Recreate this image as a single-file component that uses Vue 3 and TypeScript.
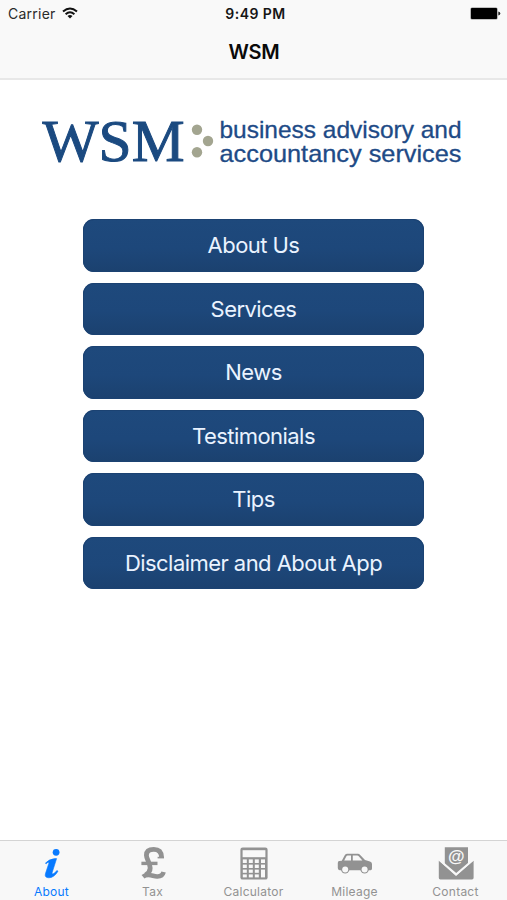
<script setup lang="ts">
import { ref } from 'vue'

type TabId = 'about' | 'tax' | 'calculator' | 'mileage' | 'contact'

interface Tab {
  id: TabId
  label: string
}

const menu: string[] = [
  'About Us',
  'Services',
  'News',
  'Testimonials',
  'Tips',
  'Disclaimer and About App',
]

const tabs: Tab[] = [
  { id: 'about', label: 'About' },
  { id: 'tax', label: 'Tax' },
  { id: 'calculator', label: 'Calculator' },
  { id: 'mileage', label: 'Mileage' },
  { id: 'contact', label: 'Contact' },
]

const active = ref<TabId>('about')
</script>

<template>
  <div class="screen">
    <header class="top">
      <div class="status">
        <div class="carrier">
          <span>Carrier</span>
          <svg class="wifi" width="16" height="12" viewBox="0 0 16 12">
            <g fill="none" stroke="#111" stroke-width="2">
              <path d="M1 4.5 Q8 -1.5 15 4.5" />
              <path d="M3.6 7.2 Q8 3.4 12.4 7.2" />
            </g>
            <path d="M5.5 9 Q8 6.9 10.5 9 L8 11.6 Z" fill="#111" />
          </svg>
        </div>
        <span class="time">9:49 PM</span>
        <svg class="battery" width="31" height="13" viewBox="0 0 31 13">
          <rect x="0.4" y="0.5" width="27.2" height="12" rx="1.6" fill="#8a8a8a" />
          <rect x="1" y="1" width="26" height="11" rx="1" fill="#000" />
          <path d="M28.3 4.4 Q30.3 5 30.3 6.5 Q30.3 8 28.3 8.6 Z" fill="#222" />
        </svg>
      </div>
      <h1 class="title">WSM</h1>
    </header>

    <main class="content">
      <svg class="logo" width="430" height="90" viewBox="0 -15 430 90">
        <text class="logo-mark" x="2.5" y="48" textLength="142" lengthAdjust="spacingAndGlyphs">WSM</text>
        <g fill="#a3a590">
          <circle cx="157" cy="16.8" r="5.2" />
          <circle cx="168" cy="28" r="5.2" />
          <circle cx="157" cy="39.2" r="5.2" />
        </g>
        <text class="logo-line" x="179.5" y="25" textLength="242" lengthAdjust="spacingAndGlyphs">business advisory and</text>
        <text class="logo-line" x="179.5" y="48.6" textLength="242" lengthAdjust="spacingAndGlyphs">accountancy services</text>
      </svg>

      <nav class="menu">
        <button v-for="item in menu" :key="item" class="menu-button" type="button">{{ item }}</button>
      </nav>
    </main>

    <footer class="tabs">
      <button
        v-for="tab in tabs"
        :key="tab.id"
        type="button"
        class="tab"
        :class="{ active: tab.id === active }"
        @click="active = tab.id"
      >
        <svg class="icon" width="40" height="38" viewBox="0 0 40 38">
          <g v-if="tab.id === 'about'" fill="currentColor">
            <circle cx="24.1" cy="11.3" r="3.4" />
            <path
              d="M13.4 22.2 Q16.6 18.4 22.8 17.6 L24.6 17.6 L20.2 31.4 Q19.8 33.3 21 32.9 Q22.6 32.2 25 29.5 L26 30.2 Q22 36.8 16.8 36.8 Q12.4 36.6 13.4 32.8 L16.8 22.4 Q17.2 20.7 15.8 21.4 L14.2 22.8 Z"
              stroke="currentColor"
              stroke-width="0.6"
            />
          </g>
          <g v-else-if="tab.id === 'tax'" fill="none" stroke="currentColor">
            <path d="M28.6 16.4 Q28.4 8.4 20.8 8.4 Q13.4 8.4 13.4 14.2 C13.4 18 17.2 22 17.2 27 Q17.2 31 12.6 34" stroke-width="4.8" />
            <path d="M24.6 16.6 H31" stroke-width="1.6" />
            <path d="M8.4 22.4 H24.5" stroke-width="3.4" />
            <path d="M10 35.8 C15 31.8 19.5 35.3 24 35.5 Q29.4 35.7 30.6 31" stroke-width="4.6" />
          </g>
          <g v-else-if="tab.id === 'calculator'">
            <rect x="6.4" y="6.6" width="27.2" height="32" rx="2.2" fill="currentColor" />
            <g fill="#f8f8f8">
              <rect x="8.6" y="9.2" width="22.8" height="7" />
              <rect x="8.8" y="18.4" width="4" height="3.6" />
              <rect x="14.8" y="18.4" width="4" height="3.6" />
              <rect x="20.8" y="18.4" width="4" height="3.6" />
              <rect x="27" y="18.4" width="4" height="3.6" />
              <rect x="8.8" y="23.6" width="4" height="3.4" />
              <rect x="14.8" y="23.6" width="4" height="3.4" />
              <rect x="20.8" y="23.6" width="4" height="3.4" />
              <rect x="27" y="23.6" width="4" height="3.4" />
              <rect x="8.8" y="28.6" width="4" height="3.2" />
              <rect x="14.8" y="28.6" width="4" height="3.2" />
              <rect x="20.8" y="28.6" width="4" height="3.2" />
              <rect x="8.8" y="33.4" width="4" height="3" />
              <rect x="14.8" y="33.4" width="4" height="3" />
              <rect x="20.8" y="33.4" width="4" height="3" />
              <rect x="27" y="28.6" width="4" height="7.8" />
            </g>
          </g>
          <g v-else-if="tab.id === 'mileage'">
            <path d="M6.8 19.8 L9.6 14.4 Q10.3 12.8 12 12.8 H22.8 Q24.2 12.8 25.2 14 L30 19 L35 20.4 Q37 21 37 23 V27.6 Q37 29.2 35.6 29.2 H4.6 Q2.8 29 2.8 27 V22 Q2.8 20.2 4.2 20 Z" fill="currentColor" />
            <path d="M9.2 19.6 L11.4 15.2 Q11.7 14.5 12.6 14.5 H16 V19.6 Z M17.8 14.5 H22.4 Q23 14.5 23.5 15 L27.4 19.6 H17.8 Z" fill="#f8f8f8" />
            <g fill="currentColor">
              <circle cx="10.2" cy="28.4" r="4.2" />
              <circle cx="29.6" cy="28.4" r="4.2" />
            </g>
            <g fill="#f8f8f8">
              <circle cx="10.2" cy="28.4" r="3" />
              <circle cx="29.6" cy="28.4" r="3" />
            </g>
          </g>
          <g v-else>
            <path d="M8.8 6.2 H32 V23.5 L20 33.4 L8.8 23.5 Z" fill="currentColor" />
            <path d="M2.8 19.6 L20 35 L37.6 19.6 V36.8 Q37.6 38.4 36 38.4 H4.4 Q2.8 38.4 2.8 36.8 Z" fill="currentColor" />
            <path d="M2.6 18.2 L20.2 33.2 L37.8 18.2" fill="none" stroke="#f8f8f8" stroke-width="1.8" />
            <text x="20.2" y="21.4" class="at">@</text>
          </g>
        </svg>
        <span class="tab-label">{{ tab.label }}</span>
      </button>
    </footer>
  </div>
</template>

<style>
body {
  margin: 0;
  background: #fff;
}
</style>

<style scoped>
.screen {
  display: flex;
  flex-direction: column;
  width: 507px;
  height: 900px;
  overflow: hidden;
  background: #fff;
  font-family: Inter, 'Liberation Sans', sans-serif;
}

button {
  margin: 0;
  padding: 0;
  border: 0;
  background: none;
  font-family: inherit;
}

.top {
  box-sizing: border-box;
  height: 80px;
  flex: none;
  border-bottom: 2px solid #e8e8e8;
  background: #f9f9f9;
}

.status {
  display: grid;
  grid-template-columns: 1fr auto 1fr;
  align-items: center;
  height: 27px;
  padding: 0 6px 0 9px;
  color: #151515;
}

.carrier {
  display: flex;
  align-items: center;
  gap: 6px;
  margin-left: -1px;
  font-size: 14px;
  letter-spacing: 0.25px;
  color: #2a2a2a;
}

.wifi {
  margin-top: -2px;
}

.time {
  padding-left: 1px;
  font-size: 14px;
  font-weight: 600;
  letter-spacing: 0.45px;
}

.battery {
  justify-self: end;
}

.title {
  margin: 0;
  padding-left: 1px;
  color: #0a0a0a;
  font-size: 20px;
  font-weight: 600;
  line-height: 51px;
  letter-spacing: -0.2px;
  text-align: center;
}

.content {
  flex: 1;
  display: flex;
  flex-direction: column;
  align-items: center;
}

.logo {
  display: block;
  margin: 18px 0 31px;
  padding-left: 3px;
}

.logo-mark {
  fill: #1b4a80;
  stroke: #1b4a80;
  stroke-width: 1px;
  font-family: 'Liberation Serif', serif;
  font-size: 60px;
}

.logo-line {
  fill: #204a86;
  stroke: #204a86;
  stroke-width: 0.3px;
  font-family: 'Liberation Sans', sans-serif;
  font-size: 24px;
}

.menu {
  display: flex;
  flex-direction: column;
  gap: 11px;
  width: 341px;
}

.menu-button {
  height: 52.5px;
  border-radius: 11px;
  background: linear-gradient(#1e497c, #1d477a 55%, #1b416f);
  box-shadow: inset 0 0 0 1px #1b4272;
  color: #eaf3ff;
  font-size: 22px;
  letter-spacing: -0.55px;
}

.tabs {
  box-sizing: border-box;
  display: grid;
  grid-template-columns: repeat(5, 101px);
  justify-content: center;
  height: 60px;
  flex: none;
  border-top: 1px solid #d4d4d4;
  background: #f8f8f8;
}

.tab {
  display: flex;
  flex-direction: column;
  align-items: center;
  color: #929292;
}

.tab.active {
  color: #087aff;
}

.icon {
  display: block;
  overflow: visible;
}

.at {
  fill: #f8f8f8;
  font-family: 'Liberation Sans', sans-serif;
  font-size: 17px;
  font-weight: 700;
  text-anchor: middle;
}

.tab-label {
  margin-top: 5px;
  font-size: 12px;
  line-height: 15px;
  letter-spacing: 0.25px;
}
</style>
